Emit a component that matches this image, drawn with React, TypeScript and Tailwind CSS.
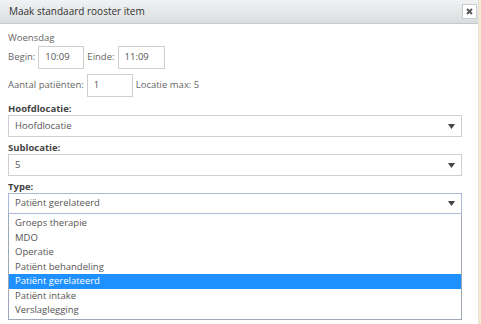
const types = [
  "Groeps therapie",
  "MDO",
  "Operatie",
  "Patiënt behandeling",
  "Patiënt gerelateerd",
  "Patiënt intake",
  "Verslaglegging",
];

function Arrow() {
  return (
    <svg width="7" height="5" viewBox="0 0 7 5" className="shrink-0">
      <path d="M0 0 L7 0 L3.5 5 Z" fill="#444" />
    </svg>
  );
}

function Select({ value, focused, height }: { value: string; focused?: boolean; height: string }) {
  return (
    <div
      className={`flex items-center justify-between pl-[6px] pr-[6px] bg-white border ${height} ${
        focused ? "border-[#a9bad6]" : "border-[#cfcfcf]"
      }`}
    >
      <span className="text-[#555]">{value}</span>
      <Arrow />
    </div>
  );
}

function TimeInput({ value, width }: { value: string; width: string }) {
  return (
    <div className={`flex items-center h-[23px] ${width} border border-[#cfcfcf] pl-[6px] text-[#555] bg-white`}>
      {value}
    </div>
  );
}

export default function App() {
  return (
    <div
      className="flex w-[481px] h-[324px] bg-white text-[9.5px] text-[#666] overflow-hidden"
      style={{ fontFamily: '"Open Sans", "Noto Sans", sans-serif' }}
    >
      <div className="flex flex-col flex-1 border-r border-[#e2e2e2]">
        {/* header */}
        <div className="flex items-center justify-between h-[24px] pl-[9px] pr-[1px] bg-gradient-to-b from-[#f1f2f3] to-[#dadddf] border-b border-[#c4c8ca]">
          <span className="text-[10px] text-[#333]">Maak standaard rooster item</span>
          <button className="flex items-center justify-center w-[15px] h-[15px] bg-white border border-[#cdcdcd]">
            <svg width="7" height="7" viewBox="0 0 7 7">
              <path d="M1 1 L6 6 M6 1 L1 6" stroke="#555" strokeWidth="1.8" />
            </svg>
          </button>
        </div>

        {/* body */}
        <div className="flex flex-col pl-[8px] pr-[16px] pt-[6px]">
          <div className="leading-[16px]">Woensdag</div>

          <div className="flex items-center gap-[3px]">
            <span>Begin:</span>
            <TimeInput value="10:09" width="w-[46px]" />
            <span>Einde:</span>
            <TimeInput value="11:09" width="w-[47px]" />
          </div>

          <div className="flex items-center gap-[3px] mt-[5px]">
            <span>Aantal patiënten:</span>
            <TimeInput value="1" width="w-[46px]" />
            <span>Locatie max: 5</span>
          </div>

          <div className="mt-[6px] h-[12px] leading-[12px] font-bold text-[#444]">Hoofdlocatie:</div>
          <Select value="Hoofdlocatie" height="h-[22px]" />

          <div className="mt-[5px] h-[12px] leading-[12px] font-bold text-[#444]">Sublocatie:</div>
          <Select value="5" height="h-[22px]" />

          <div className="mt-[5px] h-[12px] leading-[12px] font-bold text-[#444]">Type:</div>
          <Select value="Patiënt gerelateerd" focused height="h-[21px]" />

          <ul className="border border-t-0 border-[#9fa8b6] bg-white pt-[2px] pb-[1px]">
            {types.map((t) => (
              <li
                key={t}
                className={`flex items-center h-[14.5px] pl-[6px] ${
                  t === "Patiënt gerelateerd" ? "bg-[#1e90ff] text-white" : "text-[#555]"
                }`}
              >
                {t}
              </li>
            ))}
          </ul>
        </div>
      </div>
      <div className="w-[2px] bg-[#f6ebc8]" />
    </div>
  );
}
